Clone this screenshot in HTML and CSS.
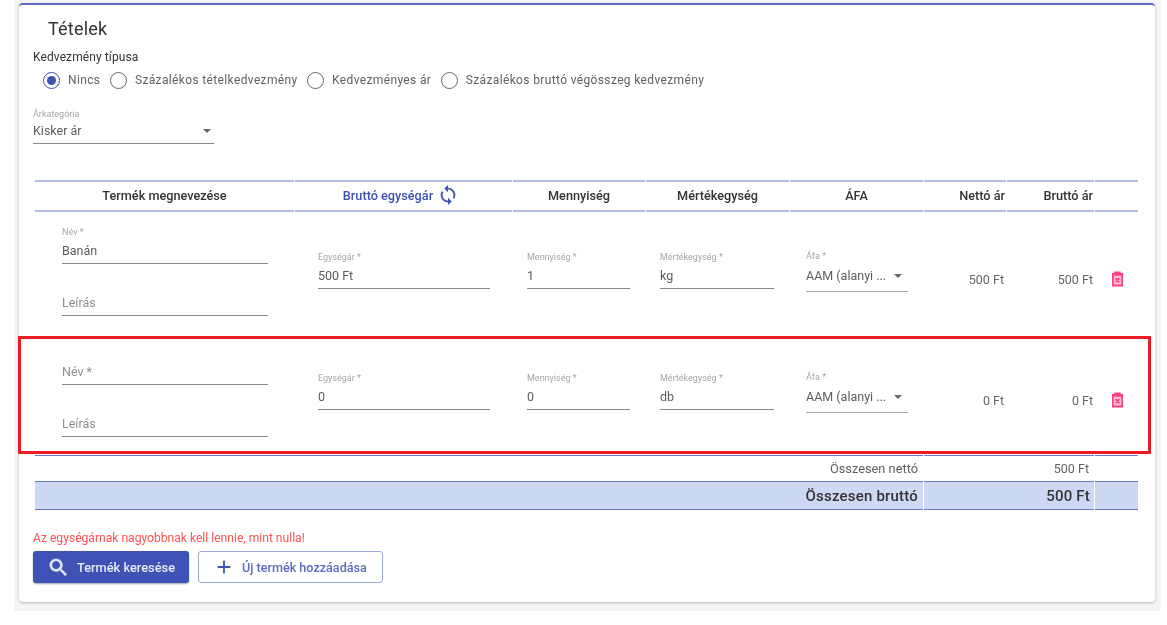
FILE: index.html
```html
<!DOCTYPE html>
<html lang="hu">
<head>
<meta charset="utf-8">
<title>Tételek</title>
<link rel="stylesheet" href="styles.css">
</head>
<body>
<div class="page">
  <section class="card">
    <h2 class="title">Tételek</h2>
    <div class="group-label">Kedvezmény típusa</div>
    <div class="radios">
      <span class="radio checked"></span><span class="radio-text">Nincs</span>
      <span class="radio"></span><span class="radio-text">Százalékos tételkedvezmény</span>
      <span class="radio"></span><span class="radio-text">Kedvezményes ár</span>
      <span class="radio"></span><span class="radio-text">Százalékos bruttó végösszeg kedvezmény</span>
    </div>
    <div class="field category">
      <div class="label">Árkategória</div>
      <div class="value select"><span>Kisker ár</span><i class="caret"></i></div>
    </div>

    <div class="grid">
      <div class="th">Termék megnevezése</div>
      <div class="th accent">Bruttó egységár
        <svg class="sync" viewBox="0 0 24 24"><path d="M12 4V1L8 5l4 4V6c3.31 0 6 2.69 6 6 0 1.01-.25 1.97-.7 2.8l1.46 1.46C19.54 15.03 20 13.57 20 12c0-4.42-3.58-8-8-8zm0 14c-3.31 0-6-2.69-6-6 0-1.01.25-1.97.7-2.8L5.24 7.74C4.46 8.97 4 10.43 4 12c0 4.42 3.58 8 8 8v3l4-4-4-4v3z"/></svg>
      </div>
      <div class="th">Mennyiség</div>
      <div class="th">Mértékegység</div>
      <div class="th">ÁFA</div>
      <div class="th th-end">Nettó ár</div>
      <div class="th th-end">Bruttó ár</div>
      <div class="th"></div>

      <div class="td name-cell">
        <div class="field"><div class="label">Név *</div><div class="value">Banán</div></div>
        <div class="field second"><div class="label"></div><div class="value muted">Leírás</div></div>
      </div>
      <div class="td unit-cell"><div class="field"><div class="label">Egységár *</div><div class="value">500 Ft</div></div></div>
      <div class="td qty-cell"><div class="field"><div class="label">Mennyiség *</div><div class="value">1</div></div></div>
      <div class="td me-cell"><div class="field"><div class="label">Mértékegység *</div><div class="value">kg</div></div></div>
      <div class="td vat-cell"><div class="field vat"><div class="label">Áfa *</div><div class="value select"><span>AAM (alanyi ...</span><i class="caret"></i></div></div></div>
      <div class="td price net">500 Ft</div>
      <div class="td price gross">500 Ft</div>
      <div class="td del-cell">
        <svg class="trash" viewBox="0 0 14 16"><path class="trash-body" d="M2 4h10v11H2z"/><path d="M1 2.5h12M4.5 2.5V1h5v1.5M2 3.5h10V15H2zM5 7l4 4.5M9 7l-4 4.5"/></svg>
      </div>

      <div class="td name-cell">
        <div class="field"><div class="label"></div><div class="value muted">Név *</div></div>
        <div class="field second"><div class="label"></div><div class="value muted">Leírás</div></div>
      </div>
      <div class="td unit-cell"><div class="field"><div class="label">Egységár *</div><div class="value">0</div></div></div>
      <div class="td qty-cell"><div class="field"><div class="label">Mennyiség *</div><div class="value">0</div></div></div>
      <div class="td me-cell"><div class="field"><div class="label">Mértékegység *</div><div class="value">db</div></div></div>
      <div class="td vat-cell"><div class="field vat"><div class="label">Áfa *</div><div class="value select"><span>AAM (alanyi ...</span><i class="caret"></i></div></div></div>
      <div class="td price net">0 Ft</div>
      <div class="td price gross">0 Ft</div>
      <div class="td del-cell">
        <svg class="trash" viewBox="0 0 14 16"><path class="trash-body" d="M2 4h10v11H2z"/><path d="M1 2.5h12M4.5 2.5V1h5v1.5M2 3.5h10V15H2zM5 7l4 4.5M9 7l-4 4.5"/></svg>
      </div>

      <div class="sum sum-label">Összesen nettó</div>
      <div class="sum sum-value">500 Ft</div>
      <div class="sum"></div>
      <div class="sum total sum-label">Összesen bruttó</div>
      <div class="sum total sum-value">500 Ft</div>
      <div class="sum total"></div>
    </div>

    <p class="error">Az egységárnak nagyobbnak kell lennie, mint nulla!</p>
    <div class="actions">
      <button class="btn primary" type="button">
        <svg class="btn-icon" viewBox="0 0 24 24"><path d="M15.5 14h-.79l-.28-.27C15.41 12.59 16 11.11 16 9.5 16 5.91 13.09 3 9.5 3S3 5.91 3 9.5 5.91 16 9.5 16c1.61 0 3.09-.59 4.23-1.57l.27.28v.79l5 4.99L20.49 19l-4.99-5zm-6 0C7.01 14 5 11.99 5 9.5S7.01 5 9.5 5 14 7.01 14 9.5 11.99 14 9.5 14z"/></svg>
        Termék keresése
      </button>
      <button class="btn outline" type="button">
        <svg class="btn-icon" viewBox="0 0 24 24"><path d="M19 13h-6v6h-2v-6H5v-2h6V5h2v6h6z"/></svg>
        Új termék hozzáadása
      </button>
    </div>
    <div class="highlight"></div>
  </section>
</div>
</body>
</html>
```

FILE: styles.css
```css
* { box-sizing: border-box; }
html, body { margin: 0; height: 100%; background: #fff; overflow: hidden; }
body { font-family: Roboto, "Liberation Sans", sans-serif; color: #424242; }

.page {
  margin-left: 14px;
  width: 1147px;
  height: 611px;
  padding: 3px 6px 0 5px;
  background: #f5f5f5;
  filter: blur(.35px);
}
.card {
  position: relative;
  height: 599px;
  padding: 0 16px 0 14px;
  background: #fff;
  border-top: 2px solid #5c6bc0;
  border-radius: 4px;
  box-shadow: 0 1px 3px rgba(0, 0, 0, .25);
}
.title {
  margin: 0;
  padding: 12px 0 0 15px;
  font-size: 18px;
  line-height: 24px;
  font-weight: 400;
  color: #333;
  letter-spacing: .2px;
}
.group-label {
  margin-top: 9px;
  font-size: 12px;
  line-height: 14px;
  color: #333;
  letter-spacing: .1px;
}
.radios {
  display: flex;
  align-items: center;
  height: 18px;
  margin-top: 7px;
  padding-left: 10px;
}
.radio {
  flex: none;
  position: relative;
  width: 17px;
  height: 17px;
  border: 1.5px solid #666;
  border-radius: 50%;
}
.radio.checked { border-color: #3f51b5; }
.radio.checked::after {
  content: "";
  position: absolute;
  inset: 3px;
  border-radius: 50%;
  background: #3f51b5;
}
.radio-text {
  margin: 0 9.5px 0 8px;
  font-size: 12px;
  letter-spacing: .36px;
  color: #616161;
  white-space: nowrap;
}

.field { display: block; }
.label {
  height: 12px;
  font-size: 9px;
  line-height: 12px;
  color: #a6a6a6;
  white-space: nowrap;
}
.value {
  height: 26px;
  padding-top: 1px;
  font-size: 12.5px;
  line-height: 24px;
  color: #5c5c5c;
  border-bottom: 1px solid #888;
  white-space: nowrap;
}
.muted { color: #8f8f8f; }
.select { display: flex; align-items: center; justify-content: space-between; padding: 0 0 2px; line-height: normal; }
.caret {
  flex: none;
  margin-right: 6px;
  border: 4px solid transparent;
  border-top: 4.5px solid #666;
  border-bottom: 0;
}
.category { width: 181px; margin-top: 19px; }
.category .value { height: 24px; }
.category .caret { margin-right: 3px; }

.grid {
  display: grid;
  grid-template-columns: 259px 217px 132px 143px 133px 82px 87px 43px;
  grid-template-rows: 32px 121px 122px 26px 29px;
  column-gap: 1px;
  width: 1103px;
  margin: 36px 0 0 2px;
}
.th {
  display: flex;
  align-items: center;
  justify-content: center;
  padding-bottom: 2px;
  font-size: 12.7px;
  font-weight: 500;
  color: #333;
  border-top: 2px solid #b4bce4;
  border-bottom: 2px solid #b4bce4;
  white-space: nowrap;
}
.th.accent { color: #3f51b5; padding-right: 5px; }
.th-end { justify-content: flex-end; padding-right: 1px; }
.sync { width: 22px; height: 22px; margin-left: 4px; fill: #3f51b5; }
.name-cell { padding: 14px 26px 0 27px; }
.name-cell .second { margin-top: 14px; }
.unit-cell { padding: 39px 22px 0 23px; }
.qty-cell { padding: 39px 15px 0 14px; }
.me-cell { padding: 39px 15px 0 14px; }
.vat-cell { padding: 38px 15px 0 16px; }
.vat .value { height: 30px; border-bottom-color: #aaa; }
.price { padding: 60px 1px 0 0; font-size: 12.5px; line-height: 16px; text-align: right; color: #666; }
.net { padding-right: 2px; }
.del-cell { padding: 59px 0 0 16px; }
.trash { display: block; width: 13px; height: 16px; fill: none; stroke: #ff4081; stroke-width: 1.9; }
.trash-body { fill: #ffc1d6; stroke: none; }

.sum {
  border-top: 1px solid #6b78c8;
  font-size: 12.8px;
  line-height: 26px;
  color: #616161;
}
.sum-label { grid-column: 1 / span 5; text-align: right; padding-right: 5px; }
.sum-value { grid-column: 6 / span 2; text-align: right; padding-right: 5px; font-size: 12.5px; }
.total {
  background: #cdd8f3;
  border-bottom: 1px solid #6b78c8;
  font-size: 15px;
  line-height: 28px;
  font-weight: 500;
  color: #333;
  letter-spacing: .2px;
}
.sum-value.total { font-size: 15px; padding-right: 4px; }
.error {
  margin: 21px 0 0;
  font-size: 12.1px;
  line-height: 14px;
  color: #ff5252;
}
.actions { display: flex; gap: 9px; margin-top: 6px; }
.btn {
  display: flex;
  align-items: center;
  height: 32px;
  padding: 0;
  font-family: inherit;
  font-size: 12.8px;
  font-weight: 500;
  border-radius: 3px;
  white-space: nowrap;
}
.primary {
  width: 156px;
  padding-left: 14px;
  gap: 7px;
  color: #e8eaf6;
  background: #3f51b5;
  border: 0;
  box-shadow: 0 1px 2px rgba(0, 0, 0, .35);
}
.primary .btn-icon { width: 23px; height: 23px; stroke: currentColor; stroke-width: .7; }
.outline {
  width: 185px;
  padding-left: 14px;
  gap: 7px;
  font-size: 12.6px;
  color: #5c6bc0;
  background: #fff;
  border: 1px solid #9fa8da;
}
.outline .btn-icon { color: #3f51b5; }
.btn-icon { width: 22px; height: 22px; fill: currentColor; }
.highlight {
  position: absolute;
  left: -1px;
  top: 331px;
  width: 1133px;
  height: 118px;
  border: 3.5px solid #ed1c24;
  pointer-events: none;
}
```
